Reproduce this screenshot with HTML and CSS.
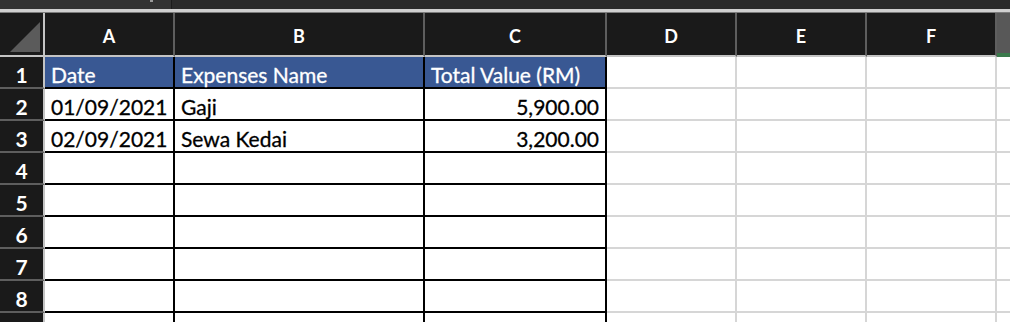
FILE: index.html
```html
<!DOCTYPE html>
<html lang="en">
<head>
    <meta charset="UTF-8">
    <meta name="viewport" content="width=device-width, initial-scale=1.0">
    <title>Expenses</title>
    <link rel="stylesheet" href="styles.css">
</head>
<body>
    <div class="topbar">
        <div class="topbar_left"><span class="topbar_mark"></span></div>
        <div class="topbar_right"></div>
    </div>
    <div class="rule"></div>

    <div class="sheet">
        <!-- column headers -->
        <div class="corner">
            <svg class="corner_tri" width="30" height="30" viewBox="0 0 30 30"><polygon points="0,30 30,30 30,0" fill="#5b5b5b"/></svg>
        </div>
        <div class="col-head">A</div>
        <div class="col-head">B</div>
        <div class="col-head">C</div>
        <div class="col-head">D</div>
        <div class="col-head">E</div>
        <div class="col-head">F</div>
        <div class="col-head scroll-cap"></div>

        <!-- row 1 -->
        <div class="row-head">1</div>
        <div class="cell tbl hd">Date</div>
        <div class="cell tbl hd">Expenses Name</div>
        <div class="cell tbl hd">Total Value (RM)</div>
        <div class="cell"></div>
        <div class="cell"></div>
        <div class="cell"></div>
        <div class="cell edge"></div>

        <!-- row 2 -->
        <div class="row-head">2</div>
        <div class="cell tbl num">01/09/2021</div>
        <div class="cell tbl">Gaji</div>
        <div class="cell tbl num">5,900.00</div>
        <div class="cell"></div>
        <div class="cell"></div>
        <div class="cell"></div>
        <div class="cell edge"></div>

        <!-- row 3 -->
        <div class="row-head">3</div>
        <div class="cell tbl num">02/09/2021</div>
        <div class="cell tbl">Sewa Kedai</div>
        <div class="cell tbl num">3,200.00</div>
        <div class="cell"></div>
        <div class="cell"></div>
        <div class="cell"></div>
        <div class="cell edge"></div>

        <div class="row-head">4</div>
        <div class="cell tbl"></div>
        <div class="cell tbl"></div>
        <div class="cell tbl"></div>
        <div class="cell"></div>
        <div class="cell"></div>
        <div class="cell"></div>
        <div class="cell edge"></div>

        <div class="row-head">5</div>
        <div class="cell tbl"></div>
        <div class="cell tbl"></div>
        <div class="cell tbl"></div>
        <div class="cell"></div>
        <div class="cell"></div>
        <div class="cell"></div>
        <div class="cell edge"></div>

        <div class="row-head">6</div>
        <div class="cell tbl"></div>
        <div class="cell tbl"></div>
        <div class="cell tbl"></div>
        <div class="cell"></div>
        <div class="cell"></div>
        <div class="cell"></div>
        <div class="cell edge"></div>

        <div class="row-head">7</div>
        <div class="cell tbl"></div>
        <div class="cell tbl"></div>
        <div class="cell tbl"></div>
        <div class="cell"></div>
        <div class="cell"></div>
        <div class="cell"></div>
        <div class="cell edge"></div>

        <div class="row-head">8</div>
        <div class="cell tbl"></div>
        <div class="cell tbl"></div>
        <div class="cell tbl"></div>
        <div class="cell"></div>
        <div class="cell"></div>
        <div class="cell"></div>
        <div class="cell edge"></div>

        <!-- row 9 is only partly visible, its number falls below the frame -->
        <div class="row-head"></div>
        <div class="cell tbl"></div>
        <div class="cell tbl"></div>
        <div class="cell tbl"></div>
        <div class="cell"></div>
        <div class="cell"></div>
        <div class="cell"></div>
        <div class="cell edge"></div>
    </div>
</body>
</html>
```

FILE: styles.css
```css
body {
    margin: 0;
    width: 1010px;
    height: 322px;
    overflow: hidden;
    background-color: #ffffff;
    font-family: Lato, "Open Sans", sans-serif;
}

.topbar {
    display: flex;
    height: 9px;
}

.topbar_left {
    width: 171px;
    background-color: #333333;
    border-right: 1px solid #1c1c1c;
    position: relative;
}

.topbar_mark {
    position: absolute;
    left: 150px;
    top: 0;
    width: 3px;
    height: 2px;
    background-color: #9a9a9a;
}

.topbar_right {
    flex: 1;
    background-color: #2b2b2b;
}

.rule {
    height: 3px;
    background-color: #d0d0d0;
    border-bottom: 1px solid #7c7c7c;
}

.sheet {
    display: grid;
    grid-template-columns: 45px 130px 250px 182px 130px 130px 130px 13px;
    grid-template-rows: 44px;
    grid-auto-rows: 32px;
}

.sheet > div {
    box-sizing: border-box;
}

.corner {
    background-color: #1a1a1a;
    border-right: 2px solid #c4c4c4;
    border-bottom: 2px solid #c4c4c4;
    padding: 9px 0 0 10px;
}

.corner_tri {
    display: block;
}

.col-head {
    background-color: #1a1a1a;
    color: #ffffff;
    font-size: 18px;
    font-weight: 700;
    text-align: center;
    line-height: 46px;
    border-right: 2px solid #5e5e5e;
    border-bottom: 2px solid #c4c4c4;
}

.col-head.scroll-cap {
    background-color: #585858;
    border-right: none;
    border-bottom: 4px solid #3b7a4c;
}

.row-head {
    background-color: #1a1a1a;
    color: #ffffff;
    font-size: 21px;
    font-weight: 700;
    text-align: center;
    line-height: 35px;
    border-right: 2px solid #c4c4c4;
    border-bottom: 2px solid #5e5e5e;
}

.cell {
    color: #000000;
    font-size: 21px;
    line-height: 35px;
    padding: 0 5px 0 6px;
    white-space: nowrap;
    -webkit-text-stroke: 0.3px currentColor;
    border-right: 2px solid #d6d6d6;
    border-bottom: 2px solid #d6d6d6;
}

.cell.tbl {
    border-right-color: #000000;
    border-bottom-color: #000000;
}

.cell.hd {
    background-color: #395893;
    color: #ffffff;
}

.cell.num {
    text-align: right;
    padding-right: 6px;
}

.cell.edge {
    border-right: none;
}
```
